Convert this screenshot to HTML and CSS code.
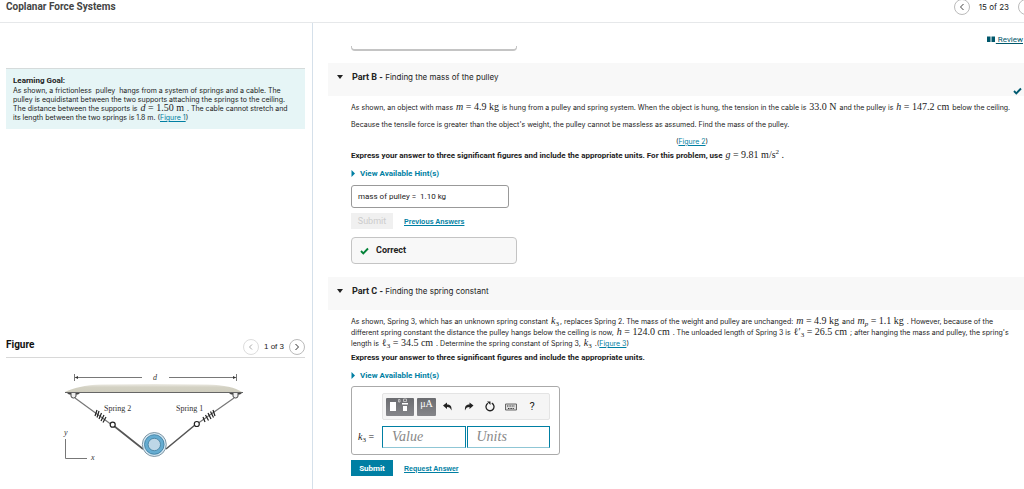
FILE: index.html
```html
<!DOCTYPE html>
<html lang="en">
<head>
<meta charset="utf-8">
<title>Coplanar Force Systems</title>
<link rel="stylesheet" href="styles.css">
</head>
<body>
<header class="topbar">
  <h1 class="title">Coplanar Force Systems</h1>
  <nav class="pager">
    <button class="round" aria-label="Previous item"><svg width="16" height="16" viewBox="0 0 16 16"><path d="M9.500 5 6.500 8l3 3" fill="none" stroke="#444"/></svg></button>
    <span>15 of 23</span>
    <button class="round" aria-label="Next item"><svg width="16" height="16" viewBox="0 0 16 16"><path d="M6.500 5l3 3-3 3" fill="none" stroke="#444"/></svg></button>
  </nav>
</header>
<div class="columns">
  <aside class="side">
    <section class="goal">
      <h2 class="goal-title">Learning Goal:</h2>
      <p class="goal-text">As shown, a frictionless&nbsp; pulley&nbsp; hangs from a system of springs and a cable. The<br>pulley is equidistant between the two supports attaching the springs to the ceiling.<br>The distance between the supports is <span class="math"><i>d</i> = 1.50 m</span> . The cable cannot stretch and<br>its length between the two springs is 1.8 m. (<a href="#figure">Figure 1</a>)</p>
    </section>
    <section class="figure" id="figure">
      <div class="figure-head">
        <h2 class="figure-title">Figure</h2>
        <nav class="figure-pager">
          <button class="round faded" aria-label="Previous figure" disabled><svg width="16" height="16" viewBox="0 0 16 16"><path d="M9 5.500 6.500 8 9 10.500" fill="none" stroke="#aaa"/></svg></button>
          <span>1 of 3</span>
          <button class="round" aria-label="Next figure"><svg width="16" height="16" viewBox="0 0 16 16"><path d="M6.500 5l3 3-3 3" fill="none" stroke="#333"/></svg></button>
        </nav>
      </div>
      <svg class="diagram" width="200" height="100" viewBox="0 0 200 100" role="img" aria-label="Pulley hung from two springs">
        <defs>
          <linearGradient id="ceiling" x1="0" y1="0" x2="0" y2="1"><stop offset="0" stop-color="#eeece5"/><stop offset=".4" stop-color="#d3d1c3"/><stop offset="1" stop-color="#d0cebf"/></linearGradient>
        </defs>
        <g stroke="#555" stroke-width=".8" fill="#333">
          <path d="M24.500 9v7M186.500 9v7M25 12.500h67M119 12.500h67" fill="none"/>
          <path d="M25 12.500l3-1.500v3zM186 12.500l-3-1.500v3z" stroke="none"/>
        </g>
        <path d="M15 27c8-4 20-7 36-7.500q54-1 106 0c18 .5 28 3 35 7.500z" fill="url(#ceiling)"/>
        <path d="M15 27.500h178" stroke="#666"/>
        <path d="M17 28h13l-2 1.500h-9zM179 28h13l-2 1.500h-9z" fill="#444"/>
        <g fill="#eee" stroke="#444"><path d="M21 28v3q0 2 2.500 2t2.500-2v-3M183 28v3q0 2 2.500 2t2.500-2v-3"/></g>
        <g fill="none">
          <path d="M25 33 62 60M184 33 147 59" stroke="#777" stroke-width="1.200"/>
          <path d="M64 61 93 84M145 60 116 84" stroke="#555" stroke-width="1.600"/>
          <g stroke="#222" stroke-width="1.200">
            <path d="M47 45l-2 6M49 46l-2 6.500M51.500 48l-2.500 6M54 50l-3 6M56 52l-3 5.500"/>
            <path d="M153 52l2 5M155.500 50l3 5.500M158 48l3 6M160.500 46.500l3 6M163 45l2 6"/>
          </g>
          <circle cx="62.700" cy="59.700" r="2.500" fill="#fff" stroke="#222" stroke-width="1.200"/><circle cx="146.800" cy="59" r="2.500" fill="#fff" stroke="#222" stroke-width="1.200"/>
          <circle cx="104.300" cy="79.500" r="12" fill="#d4e7f3" stroke="#68808e" stroke-width=".8"/>
          <circle cx="104.300" cy="79.500" r="9.800" fill="#65acd1" stroke="#39799a" stroke-width=".8"/>
          <circle cx="104.300" cy="79.500" r="6.200" fill="#bed7e7" stroke="#3e7b9c" stroke-width=".8"/>
          <path d="M15.500 74v19.500H37" stroke="#777"/>
        </g>
        <g class="diagram-text"><text x="103" y="15" font-style="italic">d</text><text x="54" y="46">Spring 2</text><text x="126" y="46">Spring 1</text><text x="14" y="70" font-style="italic">y</text><text x="41" y="95" font-style="italic">x</text></g>
      </svg>
    </section>
  </aside>
  <main class="main">
    <div class="overview">
      <div class="result-tail"></div>
      <a class="review" href="#review"><svg width="8" height="7" viewBox="0 0 8 7"><path d="M0 .5h3.500V6H0zM4.500.5H8V6H4.500z" fill="#00576b"/></svg><span>&nbsp;Review</span></a>
    </div>
    <section>
      <div class="band">
        <button class="toggle" aria-label="Collapse Part B"><svg width="8" height="5" viewBox="0 0 8 5"><path d="M1 0h6L4 4z" fill="#222"/></svg></button>
        <h2 class="part"><b>Part B -</b> Finding the mass of the pulley</h2>
        <svg class="band-check" width="9" height="8" viewBox="0 0 9 8"><path d="M1 4l2.300 2.300L8 1.500" fill="none" stroke="#005a70" stroke-width="1.900"/></svg>
      </div>
      <div class="content">
        <p class="text">As shown, an object with mass <span class="math"><i>m</i> = 4.9 kg</span> is hung from a pulley and spring system. When the object is hung, the tension in the cable is <span class="math">33.0 N</span> and the pulley is <span class="math"><i>h</i> = 147.2 cm</span> below the ceiling.</p>
        <p class="text gap-small">Because the tensile force is greater than the object's weight, the pulley cannot be massless as assumed. Find the mass of the pulley.</p>
        <p class="text gap-small center">(<a href="#figure">Figure 2</a>)</p>
        <p class="text instruct"><b>Express your answer to three significant figures and include the appropriate units. For this problem, use</b> <span class="math"><i>g</i> = 9.81 m/s<sup>2</sup> .</span></p>
        <button class="hint"><svg width="5" height="7" viewBox="0 0 5 7"><path d="M.5 0 4 3.500.5 7z" fill="#007fa3"/></svg>View Available Hint(s)</button>
        <div class="given">mass of pulley =&nbsp; 1.10 kg</div>
        <div class="actions"><button class="submit" disabled>Submit</button><a class="strong" href="#answers">Previous Answers</a></div>
        <div class="correct"><svg width="9" height="8" viewBox="0 0 9 8"><path d="M1 4l2.300 2.300L8 1.500" fill="none" stroke="#038238" stroke-width="1.900"/></svg>Correct</div>
      </div>
    </section>
    <section>
      <div class="band">
        <button class="toggle" aria-label="Collapse Part C"><svg width="8" height="5" viewBox="0 0 8 5"><path d="M1 0h6L4 4z" fill="#222"/></svg></button>
        <h2 class="part"><b>Part C -</b> Finding the spring constant</h2>
      </div>
      <div class="content">
        <p class="text">As shown, Spring 3, which has an unknown spring constant <span class="math"><i>k</i><sub>3</sub></span>, replaces Spring 2. The mass of the weight and pulley are unchanged: <span class="math"><i>m</i> = 4.9 kg</span> and <span class="math"><i>m<sub>p</sub></i> = 1.1 kg</span> . However, because of the<br>different spring constant the distance the pulley hangs below the ceiling is now, <span class="math"><i>h</i> = 124.0 cm</span> . The unloaded length of Spring 3 is <span class="math">ℓ′<sub>3</sub> = 26.5 cm</span> ; after hanging the mass and pulley, the spring's<br>length is <span class="math">ℓ<sub>3</sub> = 34.5 cm</span> . Determine the spring constant of Spring 3, <span class="math"><i>k</i><sub>3</sub></span> .(<a href="#figure">Figure 3</a>)</p>
        <p class="text instruct"><b>Express your answer to three significant figures and include the appropriate units.</b></p>
        <button class="hint"><svg width="5" height="7" viewBox="0 0 5 7"><path d="M.5 0 4 3.500.5 7z" fill="#007fa3"/></svg>View Available Hint(s)</button>
        <form class="answer">
          <div class="tools">
            <button type="button" class="tool dark" aria-label="Templates"><svg width="28" height="18" viewBox="0 0 28 18"><path d="M4 4h6v9H4zM16 5h6v1.500h-6zM17 8h4v5h-4z" fill="#fff"/><path d="M12.500 1.500h1.500v2.500h-1.500zM17.500 1h3v2.500h-3z" fill="none" stroke="#ddd" stroke-width=".7"/></svg></button>
            <button type="button" class="tool dark units" aria-label="Unit symbols">μA</button>
            <button type="button" class="tool" aria-label="Undo"><svg width="10" height="9" viewBox="0 0 10 9"><path d="M0 3.500 4 .5v2c3 0 5 1.500 4.500 6C7.500 6 6.500 5 4 5v2z" fill="#222"/></svg></button>
            <button type="button" class="tool" aria-label="Redo"><svg width="10" height="9" viewBox="0 0 10 9"><path d="M9.500 3.500 5.500.5v2c-3 0-5 1.500-4.500 6C2 6 3 5 5.500 5v2z" fill="#222"/></svg></button>
            <button type="button" class="tool" aria-label="Reset"><svg width="10" height="11" viewBox="0 0 10 11"><path d="M6.800 2.200A4 4 0 1 1 3 2.300" fill="none" stroke="#222" stroke-width="1.300"/><path d="M2 .5h3.500V4z" fill="#222"/></svg></button>
            <button type="button" class="tool" aria-label="Keyboard"><svg width="12" height="8" viewBox="0 0 12 8"><path d="M.5 1h11v6H.5z" fill="#ddd" stroke="#666"/><path d="M2 3h8M3 5.500h6" stroke="#333" stroke-dasharray="1 .6"/></svg></button>
            <button type="button" class="tool help" aria-label="Help">?</button>
          </div>
          <label class="symbol" for="value"><i>k</i><sub>3</sub> =</label>
          <div class="fields"><input class="field" id="value" placeholder="Value"><input class="field" aria-label="Units" placeholder="Units"></div>
        </form>
        <div class="actions"><button class="submit active">Submit</button><a class="strong" href="#request">Request Answer</a></div>
      </div>
    </section>
  </main>
</div>
</body>
</html>
```
FILE: styles.css
```css
* { box-sizing: border-box; }
html { height: 100%; overflow: hidden; }
body {
  margin: 0; height: 100%; overflow: hidden;
  display: flex; flex-direction: column;
  font: 8px/11px Roboto, "Liberation Sans", Arial, sans-serif;
  color: #222; background: #fff;
}
h1, h2, p { margin: 0; }
button, input { font-family: inherit; margin: 0; padding: 0; border: 0; background: none; }
svg { display: block; flex: none; }
a { color: #007fa3; text-decoration: underline; text-underline-offset: 1px; }
b { font-family: Roboto, Arial, sans-serif; font-size: 8px; }
sub, sup { font-size: 7px; line-height: 0; }
sub { vertical-align: -2px; }

.topbar {
  display: flex; justify-content: space-between; align-items: flex-start;
  height: 23px; flex: none; border-bottom: 1px solid #e6e8ea;
}
.title { padding-left: 6px; font-size: 10px; line-height: 14px; color: #444; }
.pager { display: flex; align-items: center; gap: 9px; margin: -1px -10px 0 0; font: 8px Inter, Arial, sans-serif; white-space: nowrap; }
.round {
  width: 16px; height: 16px; border: 1px solid #bbb; border-radius: 50%;
  display: flex; align-items: center; justify-content: center;
}
.round.faded { border-color: #ddd; }

.columns { flex: 1; min-height: 0; display: grid; grid-template-columns: 313px 1fr; }
.side { padding: 45px 7px 0 6px; border-right: 1px solid #d5e0ea; white-space: nowrap; }
.goal { height: 61px; padding: 7px; background: #e6f5f6; border-top: 1px solid #d5dbdb; }
.goal-title { font-size: 8px; line-height: 10px; }
.text, .goal-text { font-family: Inter, Arial, sans-serif; font-size: 7px; }
.goal-text { line-height: 9px; }
.figure { margin-top: 208px; }
.figure-head { display: flex; justify-content: space-between; height: 21px; border-bottom: 1px solid #d8d8d8; }
.figure-title { font-size: 10px; line-height: 15px; color: #111; }
.figure-pager { display: flex; gap: 5px; align-items: center; height: 17px; margin-top: 1px; font-family: "Liberation Sans", Arial, sans-serif; }
.diagram { margin: 7px 0 0 44px; }
.diagram-text { font: 8px "Liberation Serif", serif; fill: #333; }

.main { min-width: 0; padding-left: 15px; white-space: nowrap; }
.overview { height: 40px; padding: 11px 1px 0 23px; display: flex; justify-content: space-between; align-items: flex-start; }
.result-tail { width: 166px; height: 5px; margin-top: 12px; border: 1px solid #c4c4c4; border-top: 0; border-bottom-width: 2px; border-radius: 0 0 4px 4px; }
.review { display: flex; align-items: center; gap: 1px; color: #00576b; text-decoration: none; }
.review span { text-decoration: underline; }
.band { display: flex; align-items: center; height: 33px; padding: 0 3px 5px 8px; background: #f8f8f8; }
.toggle { width: 8px; margin-right: 8px; }
.part { font: 8px/12px Inter, Arial, sans-serif; }
.part b { font-size: 9px; }
.band-check { align-self: flex-end; margin: 0 -1px -4px auto; }
.content { padding: 6px 0 13px 23px; margin-right: -9px; }
.math { margin: 0 1px; font: 10px/1 "Liberation Serif", "Times New Roman", serif; line-height: 0; }
.gap-small { margin-top: 6px; }
.center { text-align: center; }
.instruct { margin-top: 3px; }
.hint { display: flex; align-items: center; gap: 4px; margin-top: 7px; font-size: 8px; line-height: 11px; font-weight: bold; color: #007fa3; }
.given { width: 158px; margin-top: 6px; padding: 6px; line-height: 9px; border: 1px solid #999; border-radius: 3px; }
.actions { display: flex; align-items: center; gap: 11px; margin-top: 5px; }
.submit { width: 42px; height: 16px; font-size: 9px; color: #ccc; background: #f0f0f0; }
.submit.active { color: #fff; background: #007fa3; font-size: 8px; font-weight: bold; }
.strong { font: bold 7px/11px "Liberation Sans", Arial, sans-serif; }
.correct { display: flex; align-items: center; gap: 7px; width: 166px; height: 27px; margin-top: 8px; padding-left: 8px; font-size: 9px; font-weight: bold; background: #f8f8f8; border: 1px solid #c4c4c4; border-radius: 4px; }

.answer { display: grid; grid-template-columns: 24px 168px; row-gap: 5px; width: 209px; height: 69px; margin-top: 5px; padding: 6px; border: 1px solid #aaa; border-radius: 3px; }
.tools { grid-column: 2; display: flex; align-items: center; height: 27px; gap: 3px; padding: 0 3px; background: #f5f5f5; border: 1px solid #e4e4e4; border-radius: 2px; }
.tool { width: 18px; height: 18px; display: flex; align-items: center; justify-content: center; color: #222; font-size: 11px; }
.tool.dark { width: 28px; background: linear-gradient(#6b6c70, #85868a); border-radius: 1px; }
.tool.units { width: 19px; padding-bottom: 5px; color: #fff; font: 10px/10px "Liberation Serif", serif; }
.symbol { align-self: center; font: 10px "Liberation Serif", serif; }
.fields { display: flex; gap: 1px; }
.field { flex: 1; min-width: 0; height: 22px; padding-left: 9px; border: 1px solid #007fa3; font: italic 14px "Liberation Serif", serif; border-bottom-color: #8fc6d5; }
.field::placeholder { color: #888; opacity: 1; }
```
